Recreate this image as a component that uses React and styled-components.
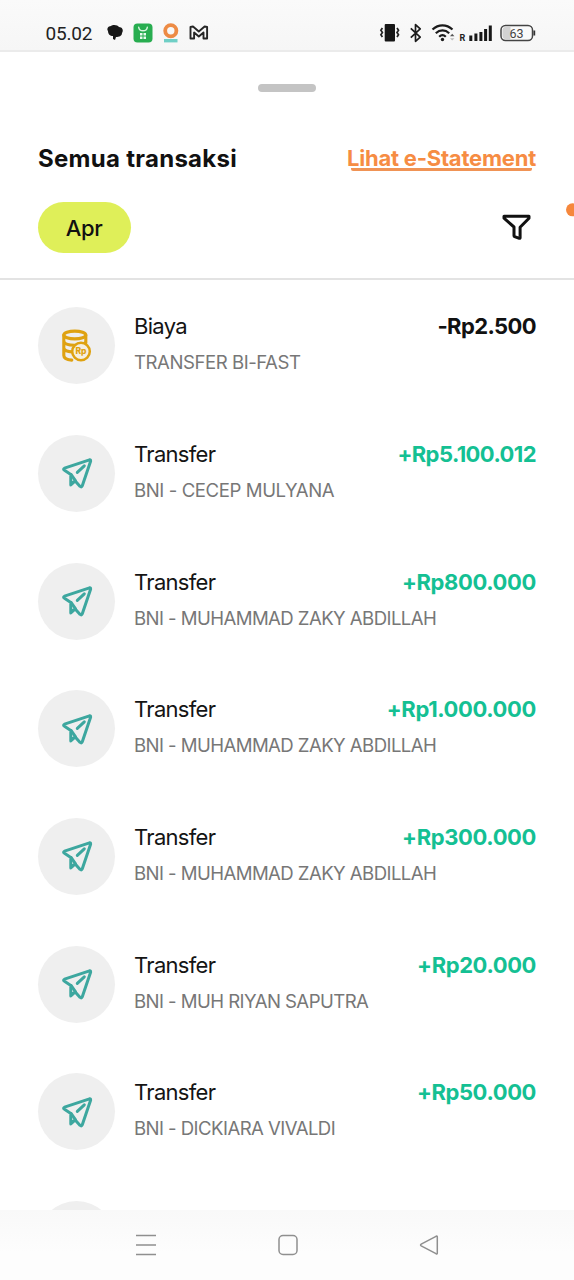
import React from 'react';
import styled, { createGlobalStyle } from 'styled-components';

const GlobalStyle = createGlobalStyle`
* { box-sizing: border-box; }
body {
  margin: 0;
  background: #fff;
  font-family: Inter, 'Liberation Sans', sans-serif;
}
`;

const Screen = styled.div`
width: 574px;
height: 1280px;
display: flex;
flex-direction: column;
overflow: hidden;
background: #fff;
`;

const StatusBar = styled.header`
height: 52px;
flex: none;
display: flex;
justify-content: space-between;
padding: 14px 37px 0 45px;
background: linear-gradient(#fafafa, #f6f6f6);
border-bottom: 2px solid #ebebeb;
`;

const StatusGroup = styled.div`
height: 38px;
display: flex;
align-items: flex-start;
`;

const Clock = styled.span`
width: 61px;
padding-left: 0.5px;
font: 400 19px/39px Roboto, sans-serif;
letter-spacing: -0.2px;
color: #222;
`;

const Sheet = styled.main`
flex: 1;
min-height: 0;
display: flex;
flex-direction: column;
overflow: hidden;
`;

const Handle = styled.div`
width: 58px;
height: 8px;
flex: none;
margin: 32px 0 0 258px;
border-radius: 4px;
background: #c4c4c4;
`;

const TitleRow = styled.div`
height: 36px;
flex: none;
display: flex;
justify-content: space-between;
margin: 48px 38px 0;
`;

const Title = styled.h1`
margin: 0;
font-size: 24px;
font-weight: 700;
line-height: 38px;
letter-spacing: 0.28px;
color: #111;
white-space: nowrap;
`;

const StatementLink = styled.a`
height: 31px;
display: flex;
flex-direction: column;
align-items: center;
font-size: 22px;
font-weight: 700;
line-height: 36px;
letter-spacing: -0.22px;
color: #f68c43;
white-space: nowrap;

&::after {
  content: '';
  width: 181px;
  height: 2.5px;
  flex: none;
  margin-top: -8px;
  border-radius: 0 0 2px 2px;
  background: #f09355;
}
`;

const FilterRow = styled.div`
height: 104px;
flex: none;
display: flex;
justify-content: space-between;
padding: 26px 0 0 38px;
border-bottom: 2px solid #e3e3e3;
`;

const Chip = styled.button`
width: 93px;
height: 51px;
border: none;
border-radius: 26px;
padding: 0 1px 0 0;
background: #dfef59;
color: #111;
font: 500 22px/52px Inter, sans-serif;
letter-spacing: -0.4px;
`;

const FilterTools = styled.div`
display: flex;
width: 73px;
justify-content: space-between;
overflow: hidden;
`;

const List = styled.ul`
margin: 0;
padding: 27.3px 38px 0;
list-style: none;
`;

const Row = styled.li`
height: 127.67px;
display: flex;
`;

const Avatar = styled.div`
width: 77px;
height: 77px;
flex: none;
display: flex;
align-items: center;
justify-content: center;
border-radius: 50%;
background: #efefef;
`;

const Details = styled.div`
flex: 1;
margin-left: 19px;
`;

const Line = styled.div`
display: flex;
justify-content: space-between;
height: 38px;
line-height: 38px;
`;

const Name = styled.span`
font-size: 22px;
font-weight: 370;
letter-spacing: -0.68px;
color: #141414;
`;

const Amount = styled.span`
font-size: 22px;
font-weight: 700;
letter-spacing: ${props => props.$spacing}px;
color: ${props => props.$incoming ? '#14c093' : '#111'};
`;

const Note = styled.div`
height: 34px;
font-size: 18.6px;
font-weight: 370;
line-height: 34px;
letter-spacing: ${props => props.$spacing}px;
color: #777;
white-space: nowrap;
`;

const NavBar = styled.nav`
height: 70px;
flex: none;
display: flex;
justify-content: space-between;
padding: 23px 133px 0 134px;
background: linear-gradient(#f9f9f9, #fdfdfd 60%);
`;

const NotificationIcons = () => (
  <svg width="110" height="38" viewBox="106 14 110 38">
    <path d="M108 31c-1.500-2 0-5 3-5 2-2 7-1 8 1 3 0 5 3 3 6 0 3-3 4-6 4l-1 3-2-1v-3c-3 0-5-2-5-5z" fill="#181818" />
    <rect x="133.500" y="23.500" width="19" height="19" rx="4" fill="#28ad50" />
    <path d="M138.700 27.300q.5 3.500 4.300 3.500t4.300-3.500" fill="none" stroke="#d9f5e0" strokeWidth="1.400" strokeLinecap="round" />
    <path d="M140 33h2.500v2.500H140zM143.500 33h2.500v2.500h-2.500zM140 36.500h2.500V39H140zM143.500 36.500h2.500V39h-2.500z" fill="#e8faed" />
    <circle cx="170.800" cy="30.800" r="5.600" fill="none" stroke="#ed8b45" strokeWidth="3.800" />
    <rect x="164" y="39" width="13.500" height="3.400" fill="#6fcfc6" />
    <path d="M190.500 38.500V27l2.500-.5 5.800 5 5.800-5 2.500.5v11.500h-3.600v-6l-4.700 4-4.700-4v6z" fill="none" stroke="#262626" strokeWidth="1.900" strokeLinejoin="round" />
  </svg>
);

const SystemIcons = () => (
  <svg width="160" height="38" viewBox="377 14 160 38">
    <rect x="384.700" y="24" width="10.300" height="17.500" rx="1" fill="#161616" />
    <path d="M382.400 28l-1.500 2.300 1.500 2.200-1.500 2.300 1.500 2.200M397 28l1.500 2.300-1.500 2.200 1.500 2.300-1.500 2.200" fill="none" stroke="#222" strokeWidth="1.700" />
    <path d="M410.800 28.300l9.400 8.800-4.700 4.200V24.700l4.700 4.200-9.400 8.800" fill="none" stroke="#1b1b1b" strokeWidth="1.700" strokeLinejoin="round" />
    <path d="M432.500 29.500c6-5.500 14-5.500 20 0M435.800 33.200c4-3.700 9.400-3.700 13.400 0M439.200 36.700c2-2 4.600-2 6.600 0" fill="none" stroke="#1b1b1b" strokeWidth="2.200" />
    <circle cx="442.500" cy="39.500" r="1.700" fill="#1b1b1b" />
    <path d="M450 36.200l2.200-2.500 2.200 2.500z" fill="#555" />
    <path d="M450 38.200l2.200 2.300 2.200-2.300z" fill="#bbb" />
    <text x="459.500" y="41" fontFamily="Roboto" fontSize="9" fontWeight="700" fill="#222">R</text>
    <path d="M470.800 41v-5.500M475.900 41v-7.500M480.900 41v-9M485.600 41V29M490.300 41V25.500" fill="none" stroke="#181818" strokeWidth="3" />
    <rect x="501" y="25.500" width="31.500" height="15" rx="4.500" fill="#fafafa" stroke="#444" strokeWidth="1.500" />
    <path d="M505.500 27h5v12h-5a3 3 0 0 1-3-3v-6a3 3 0 0 1 3-3z" fill="#d2d2d2" />
    <path d="M534.300 30.500v5" stroke="#333" strokeWidth="1.800" />
    <text x="516.500" y="37.700" textAnchor="middle" fontFamily="Roboto" fontSize="12.500" fill="#444">63</text>
  </svg>
);

const FilterIcon = () => (
  <svg width="32" height="50" viewBox="501 202 32 50">
    <path d="M504 216.200h25v2l-8.900 9v10.500q0 .8-.8.600l-4.700-1.700q-.6-.2-.6-.8V227l-10-8.800z" fill="none" stroke="#111" strokeWidth="3" strokeLinejoin="round" />
  </svg>
);

const OrangeDot = () => (
  <svg width="8" height="50" viewBox="566 202 8 50">
    <circle cx="572.500" cy="209.800" r="6.500" fill="#f6873c" />
  </svg>
);

const PlaneIcon = () => (
  <svg width="32" height="32" viewBox="0 0 32 32" fill="none" stroke="#3da79f" strokeWidth="3" strokeLinejoin="round" strokeLinecap="round">
    <path d="M28.500 2.800L3.500 11.200q-1.800 1 0 2.100l6.300 4.200v10.400l4.400-4 4.900 5.500q1.500 1.200 2.200-.6L29.600 4.200q.2-1.700-1.100-1.400z" />
    <path d="M23.300 8.800l-7 6.600M10.200 17.700l4.200 6" />
  </svg>
);

const CoinsIcon = () => (
  <svg width="32" height="34" viewBox="0 0 32 34" fill="none" stroke="#dfa211" strokeWidth="3.100" strokeLinecap="round">
    <ellipse cx="13.800" cy="6" rx="11" ry="3.900" />
    <path d="M2.800 6v20.500c0 2.700 3.500 4.200 8 4.600M24.800 6v8M2.800 12.500c1.500 5 20 5 22 .5M2.800 19.500c1 2 4 3.200 8 3.400" />
    <circle cx="20" cy="22.500" r="8.800" fill="#f5efe0" strokeWidth="2.500" />
    <text x="20" y="25.300" textAnchor="middle" fontFamily="Inter" fontSize="8.500" fontWeight="800" fill="#dfa211" stroke="none">Rp</text>
  </svg>
);

// Letter spacing is per row: the notes and amounts are set to slightly different widths
const transactions = [
  { name: 'Biaya', note: 'TRANSFER BI-FAST', amount: '-Rp2.500', noteSpacing: -0.46, amountSpacing: -0.6 },
  { name: 'Transfer', note: 'BNI - CECEP MULYANA', amount: '+Rp5.100.012', noteSpacing: -0.42, amountSpacing: -0.58 },
  { name: 'Transfer', note: 'BNI - MUHAMMAD ZAKY ABDILLAH', amount: '+Rp800.000', noteSpacing: -0.58, amountSpacing: -0.38 },
  { name: 'Transfer', note: 'BNI - MUHAMMAD ZAKY ABDILLAH', amount: '+Rp1.000.000', noteSpacing: -0.58, amountSpacing: -0.38 },
  { name: 'Transfer', note: 'BNI - MUHAMMAD ZAKY ABDILLAH', amount: '+Rp300.000', noteSpacing: -0.58, amountSpacing: -0.38 },
  { name: 'Transfer', note: 'BNI - MUH RIYAN SAPUTRA', amount: '+Rp20.000', noteSpacing: -0.57, amountSpacing: -0.4 },
  { name: 'Transfer', note: 'BNI - DICKIARA VIVALDI', amount: '+Rp50.000', noteSpacing: -0.57, amountSpacing: -0.4 },
];

const Transaction = ({ item }) => {
  const incoming = item.amount[0] === '+';
  return (
    <Row>
      <Avatar>{incoming ? <PlaneIcon /> : <CoinsIcon />}</Avatar>
      <Details>
        <Line>
          <Name>{item.name}</Name>
          <Amount $incoming={incoming} $spacing={item.amountSpacing}>{item.amount}</Amount>
        </Line>
        <Note $spacing={item.noteSpacing}>{item.note}</Note>
      </Details>
    </Row>
  );
};

function App() {
  return (
    <Screen>
      <GlobalStyle />
      <StatusBar>
        <StatusGroup>
          <Clock>05.02</Clock>
          <NotificationIcons />
        </StatusGroup>
        <SystemIcons />
      </StatusBar>
      <Sheet>
        <Handle />
        <TitleRow>
          <Title>Semua transaksi</Title>
          <StatementLink>Lihat e-Statement</StatementLink>
        </TitleRow>
        <FilterRow>
          <Chip>Apr</Chip>
          <FilterTools>
            <FilterIcon />
            <OrangeDot />
          </FilterTools>
        </FilterRow>
        <List>
          {transactions.map((item, i) => <Transaction key={i} item={item} />)}
          <Row><Avatar /></Row>
        </List>
      </Sheet>
      <NavBar>
        <svg width="24" height="24" viewBox="0 0 24 24" fill="none" stroke="#8f8f8f" strokeWidth="1.500">
          <path d="M2 2.500h20M2 12h20M2 21.500h20" />
        </svg>
        <svg width="24" height="24" viewBox="0 0 24 24" fill="none" stroke="#8f8f8f" strokeWidth="1.500">
          <rect x="3" y="2.500" width="18" height="19" rx="4" />
        </svg>
        <svg width="24" height="24" viewBox="0 0 24 24" fill="none" stroke="#8f8f8f" strokeWidth="1.500" strokeLinejoin="round">
          <path d="M19 3.300L4.200 11.200q-1.300.8 0 1.600L19 20.700q1.300.6 1.300-.8V4.100q0-1.400-1.300-.8z" />
        </svg>
      </NavBar>
    </Screen>
  );
}

export default App;
